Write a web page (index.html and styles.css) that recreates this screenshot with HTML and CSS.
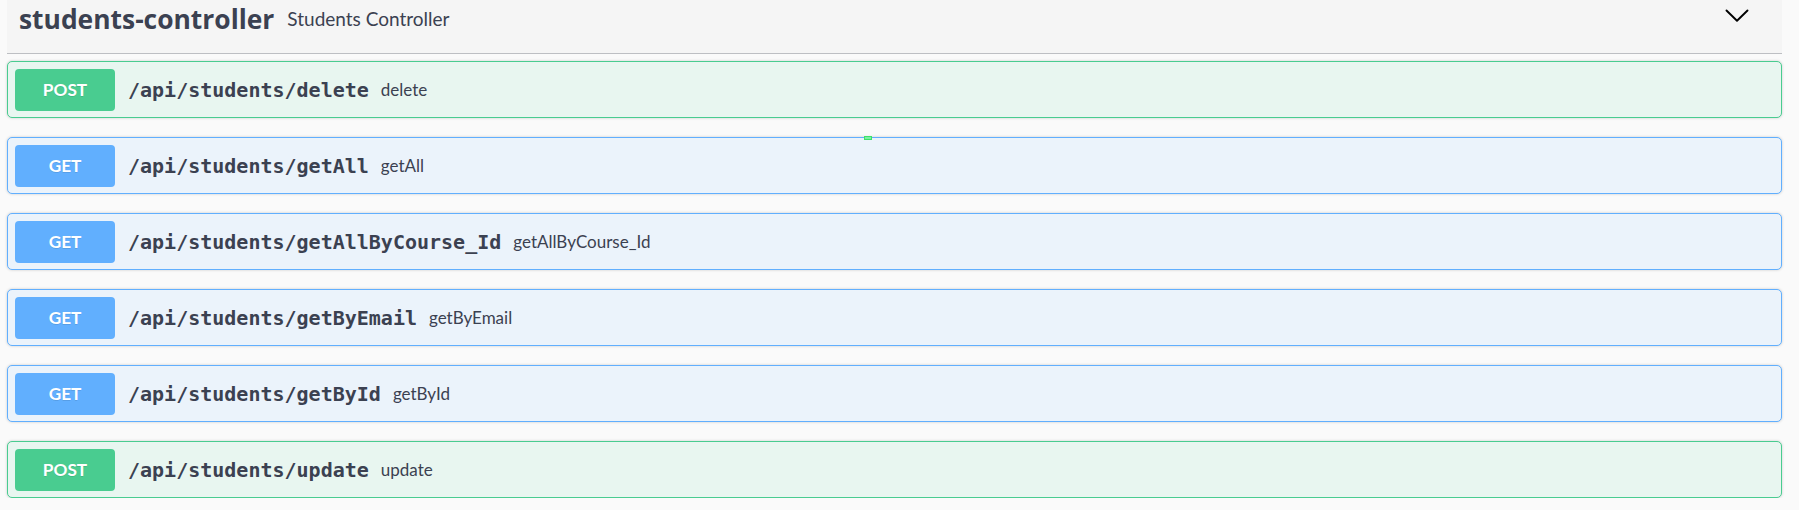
FILE: index.html
```html
<!DOCTYPE html>
<html lang="en">
<head>
<meta charset="utf-8">
<title>students-controller</title>
<link rel="stylesheet" href="styles.css">
</head>
<body>
<div class="section">
  <div class="tag">
    <span class="tag-name">students-controller</span>
    <span class="tag-desc">Students Controller</span>
    <svg class="chevron" width="24" height="14" viewBox="0 0 24 14" aria-hidden="true">
      <polyline points="1.5,1.5 12,11.8 22.5,1.5" fill="none" stroke="#000" stroke-width="1.9" stroke-linecap="round" stroke-linejoin="round"/>
    </svg>
  </div>
  <div class="ops">
    <div class="op post">
      <span class="method">POST</span>
      <span class="path">/api/students/delete</span>
      <span class="desc">delete</span>
    </div>
    <div class="op get">
      <span class="method">GET</span>
      <span class="path">/api/students/getAll</span>
      <span class="desc">getAll</span>
      <span class="mark"></span>
    </div>
    <div class="op get">
      <span class="method">GET</span>
      <span class="path">/api/students/getAllByCourse_Id</span>
      <span class="desc">getAllByCourse_Id</span>
    </div>
    <div class="op get">
      <span class="method">GET</span>
      <span class="path">/api/students/getByEmail</span>
      <span class="desc">getByEmail</span>
    </div>
    <div class="op get">
      <span class="method">GET</span>
      <span class="path">/api/students/getById</span>
      <span class="desc">getById</span>
    </div>
    <div class="op post">
      <span class="method">POST</span>
      <span class="path">/api/students/update</span>
      <span class="desc">update</span>
    </div>
  </div>
</div>
</body>
</html>
```

FILE: styles.css
```css
html, body {
  margin: 0;
  padding: 0;
  background: #fafafa;
  color: #3b4151;
}

.section {
  margin-left: 7px;
  width: 1775px;
}

.tag {
  display: flex;
  align-items: flex-start;
  height: 53px;
  border-bottom: 1px solid rgba(59, 65, 81, 0.3);
  background: #f5f5f5;
  padding-left: 12px;
  box-sizing: content-box;
}

.tag-name {
  font-family: "Open Sans", "Liberation Sans", sans-serif;
  font-weight: 700;
  font-size: 26.4px;
  line-height: 38px;
  color: #3b4151;
}

.tag-desc {
  font-family: Lato, "Liberation Sans", sans-serif;
  font-size: 19px;
  line-height: 38px;
  margin-left: 13px;
  color: #3b4151;
}

.chevron {
  margin-left: auto;
  margin-right: 33px;
  margin-top: 9px;
}

.ops {
  display: flex;
  flex-direction: column;
  gap: 19px;
  padding-top: 7px;
}

.op {
  position: relative;
  display: flex;
  align-items: center;
  height: 57px;
  box-sizing: border-box;
  padding: 7px;
  border: 1px solid;
  border-radius: 5px;
  box-shadow: 0 0 3px rgba(0, 0, 0, 0.19);
}

.op.post {
  background: #e8f6f0;
  border-color: #49cc90;
}

.op.get {
  background: #ebf3fb;
  border-color: #61affe;
}

.method {
  flex: none;
  width: 100px;
  height: 42px;
  border-radius: 4px;
  display: flex;
  align-items: center;
  justify-content: center;
  font-family: Lato, "Liberation Sans", sans-serif;
  font-weight: 700;
  font-size: 17.2px;
  color: #fff;
  text-shadow: 0 1px 0 rgba(0, 0, 0, 0.1);
}

.post .method { background: #49cc90; }
.get .method { background: #61affe; }

.path {
  font-family: "DejaVu Sans Mono", "Liberation Mono", monospace;
  font-weight: 700;
  font-size: 20px;
  color: #3b4151;
  padding: 0 12px 0 13px;
}

.desc {
  font-family: Lato, "Liberation Sans", sans-serif;
  font-size: 17px;
  color: #3b4151;
}

.mark {
  position: absolute;
  left: 856px;
  top: -2px;
  width: 6px;
  height: 2px;
  border: 1px solid #3ee06a;
  background: #7cf0a0;
}
```
